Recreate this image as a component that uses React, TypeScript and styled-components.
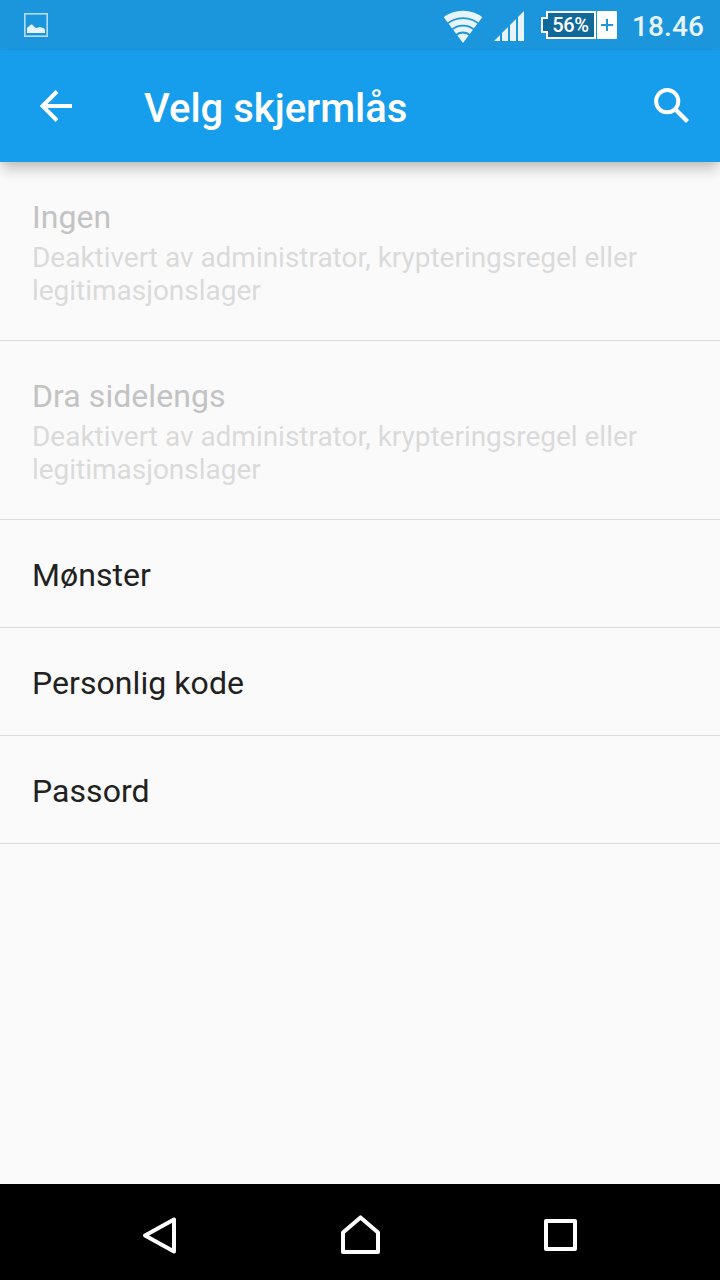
import React from "react";
import styled, { createGlobalStyle } from "styled-components";

const GlobalStyle = createGlobalStyle`
  * { box-sizing: border-box; }
  body { margin: 0; background: #fafafa; font-family: Roboto, sans-serif; }
  svg { display: block; flex: none; }
`;

const Screen = styled.div`
  display: flex;
  flex-direction: column;
  width: 720px;
  height: 1280px;
  overflow: hidden;
  background: #fafafa;
`;

const StatusBar = styled.div`
  display: flex;
  align-items: center;
  height: 50px;
  padding: 0 16px 0 24px;
  background: #1b96dc;
`;

const StatusIcons = styled.div`
  display: flex;
  align-items: center;
  margin-left: auto;
`;

const WifiSlot = styled.div`
  padding-top: 4px;
`;

const SignalSlot = styled.div`
  margin-left: 11px;
  padding-top: 2px;
`;

const Battery = styled.div`
  display: flex;
  align-items: center;
  margin-left: 17px;
`;

const BatteryNub = styled.div`
  z-index: 1;
  width: 7px;
  height: 16px;
  margin-right: -2px;
  border: 2px solid #fff;
  border-right: 0;
  background: #11699a;
`;

const BatteryBody = styled.div`
  display: flex;
  align-items: center;
  justify-content: center;
  width: 50px;
  height: 28px;
  padding-right: 1px;
  border: 2px solid #fff;
  background: #11699a;
  color: #fff;
  font-size: 20px;
  font-weight: 500;
  line-height: 24px;
  letter-spacing: -0.4px;
`;

const BatteryPlus = styled.div`
  display: flex;
  align-items: center;
  justify-content: center;
  width: 20px;
  height: 28px;
  margin-left: 1px;
  border-radius: 1px;
  background: #fff;
`;

const Clock = styled.div`
  margin-left: 15px;
  width: 72px;
  padding-top: 4px;
  color: #e8f4fb;
  font-size: 28px;
  font-weight: 500;
  line-height: 34px;
  letter-spacing: 0.1px;
  white-space: nowrap;
`;

const AppBar = styled.header`
  position: relative;
  z-index: 1;
  display: flex;
  align-items: center;
  height: 112px;
  padding: 0 30px 0 40px;
  background: #169deb;
  box-shadow: 0 10px 12px -2px rgba(0, 0, 0, 0.2), 0 2px 4px rgba(0, 0, 0, 0.05);
`;

const Title = styled.h1`
  flex: 1;
  margin: 6px 0 0 72px;
  color: #fff;
  font-size: 40px;
  font-weight: 500;
  line-height: 48px;
`;

const List = styled.main`
  flex: 1;
`;

const Row = styled.div<{ $disabled?: boolean }>`
  height: ${(p) => (p.$disabled ? 179 : 108)}px;
  padding: 36px 32px 0;
  border-bottom: 1px solid #dadada;
  color: ${(p) => (p.$disabled ? "#c3c3c3" : "#212121")};
`;

const RowTitle = styled.div`
  font-size: 32px;
  line-height: 38px;
  letter-spacing: 0.06px;
`;

const Summary = styled.div`
  margin-top: 5px;
  color: #dadada;
  font-size: 28px;
  line-height: 33px;
  letter-spacing: -0.02px;
`;

const NavBar = styled.nav`
  display: flex;
  align-items: center;
  justify-content: space-between;
  height: 96px;
  padding: 6px 140px 0;
  background: #000;
`;

const disabledNote = "Deaktivert av administrator, krypteringsregel eller legitimasjonslager";

const options = [
  { label: "Ingen", note: disabledNote },
  { label: "Dra sidelengs", note: disabledNote },
  { label: "Mønster" },
  { label: "Personlig kode" },
  { label: "Passord" },
];

const PictureIcon = () => (
  <svg width="24" height="24" viewBox="0 0 24 24">
    <rect x="0.8" y="0.8" width="22.4" height="22.4" fill="none" stroke="#b6dcf3" strokeWidth="1.6" />
    <path
      d="M3 20V15.5Q3 14.2 4.5 13.8L6.6 11.8Q7.5 11 8.4 11.8L10.5 14Q12.5 15.6 14 14.6Q16 13.2 17.6 14.6Q21 15.6 21 17V20Z"
      fill="#e8f4fb"
    />
  </svg>
);

const WifiIcon = () => (
  <svg width="40" height="34" viewBox="0 0 40 34">
    <defs>
      <clipPath id="fan">
        <path d="M20 33L0 6.2V0H40V6.2Z" />
      </clipPath>
    </defs>
    <g clipPath="url(#fan)" fill="none" stroke="#e8f4fb">
      <circle cx="20" cy="33" r="29" strokeWidth="6.4" />
      <circle cx="20" cy="33" r="21.2" strokeWidth="5.8" />
      <circle cx="20" cy="33" r="14" strokeWidth="5.2" />
      <circle cx="20" cy="33" r="4.8" strokeWidth="9.6" />
    </g>
  </svg>
);

const SignalIcon = () => (
  <svg width="30" height="30" viewBox="0 0 30 30">
    <g fill="#e8f4fb">
      <path d="M0 30L6 24V30Z" />
      <path d="M8 22L14 16V30H8Z" />
      <path d="M16 14L22 8V30H16Z" />
      <path d="M24 6L30 0V30H24Z" />
    </g>
  </svg>
);

const PlusIcon = () => (
  <svg width="12" height="12" viewBox="0 0 12 12">
    <path d="M6 0V12M0 6H12" stroke="#1b96dc" strokeWidth="2" />
  </svg>
);

const BackArrow = () => (
  <svg width="32" height="32" viewBox="0 0 32 32">
    <path d="M32 16H4M17 1.5L2.5 16L17 30.5" fill="none" stroke="#fff" strokeWidth="4" />
  </svg>
);

const SearchIcon = () => (
  <svg width="36" height="36" viewBox="0 0 36 36">
    <circle cx="13.2" cy="13.2" r="11.1" fill="none" stroke="#fff" strokeWidth="4" />
    <path d="M22 22L33.5 33.5" stroke="#fff" strokeWidth="4.4" />
  </svg>
);

const NavBack = () => (
  <svg width="40" height="40" viewBox="0 0 40 40">
    <path d="M34 4.5V36.5L5 20.5Z" fill="none" stroke="#fff" strokeWidth="4" strokeLinejoin="round" />
  </svg>
);

const NavHome = () => (
  <svg width="40" height="40" viewBox="0 0 40 40">
    <path d="M20.5 2.4L38 17.5V37H3V17.5Z" fill="none" stroke="#fff" strokeWidth="4" strokeLinejoin="round" />
  </svg>
);

const NavRecent = () => (
  <svg width="40" height="40" viewBox="0 0 40 40">
    <rect x="6" y="6" width="29" height="28" fill="none" stroke="#fff" strokeWidth="4" strokeLinejoin="round" />
  </svg>
);

export default function App() {
  return (
    <Screen>
      <GlobalStyle />
      <StatusBar>
        <PictureIcon />
        <StatusIcons>
          <WifiSlot>
            <WifiIcon />
          </WifiSlot>
          <SignalSlot>
            <SignalIcon />
          </SignalSlot>
          <Battery>
            <BatteryNub />
            <BatteryBody>56%</BatteryBody>
            <BatteryPlus>
              <PlusIcon />
            </BatteryPlus>
          </Battery>
          <Clock>18.46</Clock>
        </StatusIcons>
      </StatusBar>
      <AppBar>
        <BackArrow />
        <Title>Velg skjermlås</Title>
        <SearchIcon />
      </AppBar>
      <List>
        {options.map((o) => (
          <Row key={o.label} $disabled={!!o.note}>
            <RowTitle>{o.label}</RowTitle>
            {o.note && <Summary>{o.note}</Summary>}
          </Row>
        ))}
      </List>
      <NavBar>
        <NavBack />
        <NavHome />
        <NavRecent />
      </NavBar>
    </Screen>
  );
}
